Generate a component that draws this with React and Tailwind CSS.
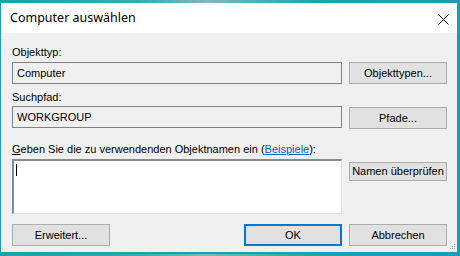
export default function App() {
  const ui = { fontFamily: '"Liberation Sans", Arial, sans-serif' };
  const btn =
    "h-[22px] w-[98px] shrink-0 bg-[#e1e1e1] border border-[#adadad] text-[11px] text-black flex items-center justify-center leading-none";

  return (
    <div
      className="w-[460px] h-[256px] overflow-hidden pt-[3px] bg-[linear-gradient(90deg,#1b9fb0,#3aa9b4_30%,#7db7bc_45%,#1aa0b2_70%,#179fb1)]"
      style={ui}
    >
      <div className="w-[458px] h-[251px] bg-[#1a9fb2] flex flex-col px-px pb-[2px]">
        {/* Title bar */}
        <div className="h-[30px] bg-white flex items-center justify-between pl-[9px] pr-[8px] shrink-0">
          <span
            className="text-[12.5px] text-black"
            style={{ fontFamily: '"Noto Sans", "Open Sans", sans-serif' }}
          >
            Computer auswählen
          </span>
          <svg width="11" height="11" viewBox="0 0 11 11" className="mt-[2px]">
            <path d="M0.5 0.5 L10.5 10.5 M10.5 0.5 L0.5 10.5" stroke="#000" strokeWidth="1" />
          </svg>
        </div>

        {/* Body */}
        <div className="flex-1 bg-[#f0f0f0] pl-[11px] pt-[12px] relative text-[11px] text-black">
          <div className="h-[13px] leading-[13px] mt-px">Objekttyp:</div>
          <div className="flex gap-[7px] mt-[3px]">
            <div className="h-[22px] w-[330px] border border-[#838383] bg-[#f0f0f0] flex items-center pl-[4px]">
              Computer
            </div>
            <div className={btn}>Objekttypen...</div>
          </div>

          <div className="h-[13px] leading-[13px] mt-[7px]">Suchpfad:</div>
          <div className="flex gap-[7px] mt-[2px]">
            <div className="h-[22px] w-[330px] border border-[#838383] bg-[#f0f0f0] flex items-center pl-[4px]">
              WORKGROUP
            </div>
            <div className={btn + " mt-px"}>Pfade...</div>
          </div>

          <div className="h-[13px] leading-[13px] mt-[14px]">
            <span className="underline">G</span>eben Sie die zu verwendenden Objektnamen ein (
            <span className="text-[#0066cc] underline">Beispiele</span>):
          </div>
          <div className="flex gap-[7px] mt-[3px]">
            <div className="h-[55px] w-[330px] bg-white border-t-2 border-l-2 border-t-[#8a8a8a] border-l-[#8a8a8a] border-b border-r border-b-[#e3e3e3] border-r-[#e3e3e3] pl-[2px] pt-[3px]">
              <div className="w-px h-[12px] bg-black" />
            </div>
            <div className="h-[19px] w-[98px] mt-[3px] bg-[#e1e1e1] border border-[#adadad] text-[11px] flex items-center justify-center leading-none">
              Namen überprüfen
            </div>
          </div>

          <div className="flex mt-[10px]">
            <div className={btn}>Erweitert...</div>
            <div className="ml-auto mr-[10px] flex gap-[7px]">
              <div className="h-[22px] w-[98px] bg-[#e1e1e1] border-2 border-[#0078d7] flex items-center justify-center leading-none">
                OK
              </div>
              <div className={btn}>Abbrechen</div>
            </div>
          </div>

          {/* Resize grip */}
          <svg width="6" height="6" viewBox="0 0 6 6" className="absolute right-[1px] bottom-[2px]">
            <rect x="4" y="0" width="1" height="1" fill="#b4b4b4" />
            <rect x="2" y="2" width="1" height="1" fill="#b4b4b4" />
            <rect x="4" y="2" width="1" height="1" fill="#b4b4b4" />
            <rect x="0" y="4" width="1" height="1" fill="#b4b4b4" />
            <rect x="2" y="4" width="1" height="1" fill="#b4b4b4" />
            <rect x="4" y="4" width="1" height="1" fill="#b4b4b4" />
          </svg>
        </div>
      </div>
    </div>
  );
}
